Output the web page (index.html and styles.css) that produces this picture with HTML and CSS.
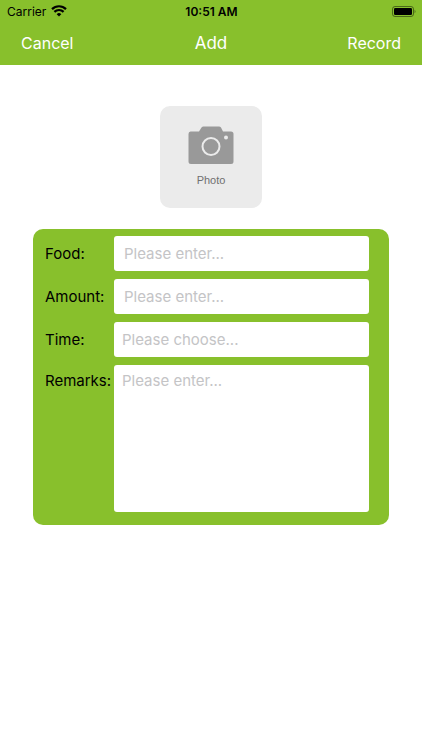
FILE: index.html
```html
<!DOCTYPE html>
<html lang="en">
<head>
    <meta charset="UTF-8">
    <meta name="viewport" content="width=device-width, initial-scale=1.0">
    <title>Add</title>
    <link rel="stylesheet" href="styles.css">
</head>
<body>
    <header>
        <div class="status">
            <div class="carrier">
                <span>Carrier</span>
                <svg class="wifi" viewBox="0 0 16 12" width="16" height="12">
                    <path d="M8 11.6 5.7 9.2a3.3 3.3 0 0 1 4.6 0z"/>
                    <path d="M3.4 6.9a6.5 6.5 0 0 1 9.2 0" class="arc"/>
                    <path d="M1 4.1a10 10 0 0 1 14 0" class="arc"/>
                </svg>
            </div>
            <div class="clock">10:51 AM</div>
            <svg class="battery" viewBox="0 0 25 11" width="25" height="11">
                <rect x="1.5" y=".5" width="21" height="10" rx="2.5" class="shell"/>
                <rect x="3" y="2" width="18" height="7" rx="1.2"/>
                <path d="M23.600 3.800c1.200.5 1.200 2.900 0 3.400z" class="cap"/>
            </svg>
        </div>
        <nav>
            <button type="button">Cancel</button>
            <h1>Add</h1>
            <button type="button">Record</button>
        </nav>
    </header>
    <main>
        <button type="button" class="photo">
            <svg viewBox="0 0 46 38" width="46" height="38">
                <path d="M2.5 5.5H11L13.500 1.500Q14.300.5 15.500.5H31Q32.200.5 33 1.500L35 5.500H43Q45.500 5.500 45.500 8V35.500Q45.500 38 43 38H3Q.5 38 .5 35.500V8Q.5 5.500 2.500 5.500z" fill="#999999"/>
                <circle cx="23" cy="20.500" r="8.500" fill="none" stroke="#EBEBEB" stroke-width="2"/>
                <circle cx="38" cy="11.500" r="2" fill="#EBEBEB"/>
            </svg>
            <span>Photo</span>
        </button>
        <form>
            <label for="food">Food:</label>
            <input type="text" id="food" placeholder="Please enter...">
            <label for="amount">Amount:</label>
            <input type="text" id="amount" placeholder="Please enter...">
            <label for="time">Time:</label>
            <input type="text" id="time" class="tight" placeholder="Please choose...">
            <label for="remarks" class="top">Remarks:</label>
            <textarea id="remarks" class="tight" placeholder="Please enter..."></textarea>
        </form>
    </main>
</body>
</html>
```

FILE: styles.css
```css
* {
    margin: 0;
    box-sizing: border-box;
    font-family: Inter, "Liberation Sans", sans-serif;
}
body {
    background-color: #FFFFFF;
}
header {
    background-color: #88C02C;
}
.status {
    display: grid;
    grid-template-columns: 1fr auto 1fr;
    align-items: center;
    height: 22px;
    padding: 0 6px 0 7px;
    font-size: 12px;
}
.carrier {
    display: flex;
    align-items: center;
    gap: 5px;
}
.clock {
    font-weight: 600;
}
.wifi .arc {
    fill: none;
    stroke: #000000;
    stroke-width: 2.2;
}
.battery {
    justify-self: end;
}
.battery .shell {
    fill: none;
    stroke: #000000;
    stroke-opacity: .45;
}
.battery .cap {
    fill-opacity: .5;
}
nav {
    display: grid;
    grid-template-columns: 1fr auto 1fr;
    align-items: center;
    height: 43px;
    padding: 0 21px 2px;
    color: #FFFFFF;
}
nav button {
    justify-self: start;
    border: 0;
    padding: 0;
    background: none;
    color: #FFFFFF;
    font-size: 16px;
    cursor: pointer;
}
nav button:last-child {
    justify-self: end;
}
nav h1 {
    font-size: 17px;
    font-weight: normal;
}
main {
    padding: 41px 33px;
}
.photo {
    display: flex;
    flex-direction: column;
    align-items: center;
    gap: 8px;
    width: 102px;
    height: 102px;
    margin: 0 auto 21px;
    padding: 20px 0 0;
    border: 0;
    border-radius: 10px;
    background-color: #EBEBEB;
    color: #707070;
    cursor: pointer;
}
.photo span {
    font-family: "Liberation Sans", Arial, sans-serif;
    font-size: 11px;
    line-height: 16px;
}
form {
    display: grid;
    grid-template-columns: 69px 1fr;
    gap: 8px 0;
    padding: 7px 20px 13px 12px;
    border-radius: 10px;
    background-color: #88C02C;
}
form label {
    font-size: 15px;
    line-height: 35px;
}
form .top {
    line-height: 32px;
}
input, textarea {
    width: 100%;
    height: 35px;
    padding: 0 10px;
    border: 0;
    border-radius: 3px;
    background-color: #FFFFFF;
    font-size: 15px;
}
textarea {
    display: block;
    height: 147px;
    padding: 6px 10px;
    line-height: 20px;
    resize: none;
}
.tight {
    padding-left: 8px;
}
::placeholder {
    color: #C4C4C6;
}
```
